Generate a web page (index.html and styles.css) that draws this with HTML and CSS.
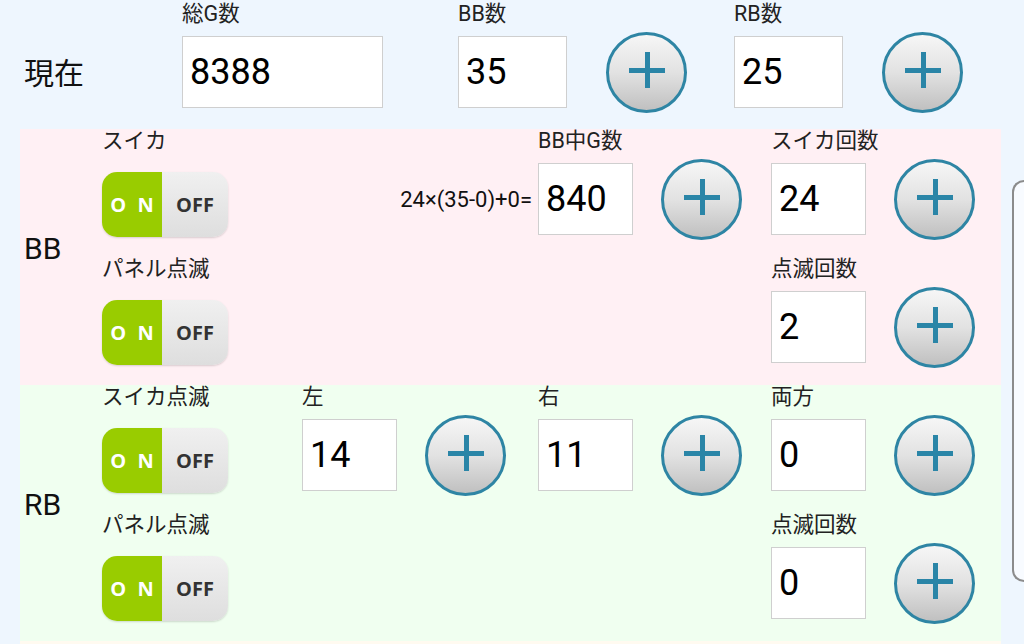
FILE: index.html
```html
<!DOCTYPE html>
<html lang="ja">
    <head>
        <meta charset="utf-8">
        <link rel="stylesheet" href="styles.css">
    </head>
    <body>
        <div class="main-wrapper">
            <div class="now-row">
                <div class="row-title">現在</div>
                <div class="field">
                    <div class="field-label">総G数</div>
                    <div class="field-body">
                        <div class="num-box wide">8388</div>
                    </div>
                </div>
                <div class="field">
                    <div class="field-label">BB数</div>
                    <div class="field-body">
                        <div class="num-box mid">35</div>
                        <a href="javascript:;" class="plus-btn"></a>
                    </div>
                </div>
                <div class="field">
                    <div class="field-label">RB数</div>
                    <div class="field-body">
                        <div class="num-box mid">25</div>
                        <a href="javascript:;" class="plus-btn"></a>
                    </div>
                </div>
            </div>

            <div class="section bb">
                <div class="section-title">BB</div>

                <div class="field">
                    <div class="field-label">スイカ</div>
                    <div class="field-body">
                        <div class="toggle"><span class="on">O N</span><span class="off">OFF</span></div>
                    </div>
                </div>
                <div class="field">
                    <div class="field-label"></div>
                    <div class="field-body formula">24×(35-0)+0=</div>
                </div>
                <div class="field">
                    <div class="field-label">BB中G数</div>
                    <div class="field-body">
                        <div class="num-box">840</div>
                        <a href="javascript:;" class="plus-btn"></a>
                    </div>
                </div>
                <div class="field">
                    <div class="field-label">スイカ回数</div>
                    <div class="field-body">
                        <div class="num-box">24</div>
                        <a href="javascript:;" class="plus-btn"></a>
                    </div>
                </div>

                <div class="field">
                    <div class="field-label">パネル点滅</div>
                    <div class="field-body">
                        <div class="toggle"><span class="on">O N</span><span class="off">OFF</span></div>
                    </div>
                </div>
                <div class="field"></div>
                <div class="field"></div>
                <div class="field">
                    <div class="field-label">点滅回数</div>
                    <div class="field-body">
                        <div class="num-box">2</div>
                        <a href="javascript:;" class="plus-btn"></a>
                    </div>
                </div>
            </div>

            <div class="section rb">
                <div class="section-title">RB</div>

                <div class="field">
                    <div class="field-label">スイカ点滅</div>
                    <div class="field-body">
                        <div class="toggle"><span class="on">O N</span><span class="off">OFF</span></div>
                    </div>
                </div>
                <div class="field">
                    <div class="field-label">左</div>
                    <div class="field-body">
                        <div class="num-box">14</div>
                        <a href="javascript:;" class="plus-btn"></a>
                    </div>
                </div>
                <div class="field">
                    <div class="field-label">右</div>
                    <div class="field-body">
                        <div class="num-box">11</div>
                        <a href="javascript:;" class="plus-btn"></a>
                    </div>
                </div>
                <div class="field">
                    <div class="field-label">両方</div>
                    <div class="field-body">
                        <div class="num-box">0</div>
                        <a href="javascript:;" class="plus-btn"></a>
                    </div>
                </div>

                <div class="field">
                    <div class="field-label">パネル点滅</div>
                    <div class="field-body">
                        <div class="toggle"><span class="on">O N</span><span class="off">OFF</span></div>
                    </div>
                </div>
                <div class="field"></div>
                <div class="field"></div>
                <div class="field">
                    <div class="field-label">点滅回数</div>
                    <div class="field-body">
                        <div class="num-box">0</div>
                        <a href="javascript:;" class="plus-btn"></a>
                    </div>
                </div>
            </div>

            <div class="section extra"></div>
        </div>

        <div class="side-panel"></div>
    </body>
</html>
```

FILE: styles.css
```css
html, body {
    margin: 0;
    height: 100%;
    overflow: hidden;
}
body {
    background: #eef6fe;
    font-family: Roboto, "Noto Sans CJK JP", sans-serif;
    color: #111;
}
.main-wrapper {
    width: 981px;
    margin-left: 20px;
}

/* top row */
.now-row {
    display: grid;
    grid-template-columns: 162px 276px 276px 267px;
    padding: 2px 0 17px;
    height: 110px;
}
.row-title,
.section-title {
    padding-left: 4px;
    font-size: 30px;
    display: flex;
    align-items: center;
}
.now-row .row-title {
    padding-top: 27px;
}

/* field cell: label + box + plus */
.field-label {
    height: 24px;
    line-height: 24px;
    font-size: 21.5px;
    color: #222;
    white-space: nowrap;
}
.field-body {
    display: flex;
    align-items: center;
    height: 80px;
    margin-top: 6px;
}
.num-box {
    box-sizing: border-box;
    width: 95px;
    height: 72px;
    line-height: 70px;
    padding-left: 7px;
    background: #fff;
    border: 1px solid #cfcfcf;
    font-size: 36px;
    color: #000;
}
.num-box.wide {
    width: 201px;
}
.num-box.mid {
    width: 109px;
}
.num-box + .plus-btn {
    margin-left: 28px;
}
.now-row .num-box + .plus-btn {
    margin-left: 39px;
}

.plus-btn {
    position: relative;
    display: block;
    box-sizing: border-box;
    width: 81px;
    height: 81px;
    border-radius: 50%;
    border: 3px solid #2e85a4;
    background: linear-gradient(#f6f6f6, #e2e2e2 50%, #c0c0c0);
}
.plus-btn::before,
.plus-btn::after {
    content: "";
    position: absolute;
    left: 50%;
    top: 50%;
    background: #2a85a7;
}
.plus-btn::before {
    width: 36px;
    height: 5px;
    margin: -4px 0 0 -18px;
}
.plus-btn::after {
    width: 5px;
    height: 36px;
    margin: -20px 0 0 -2px;
}

/* sections */
.section {
    display: grid;
    grid-template-columns: 82px 200px 236px 233px 230px;
    grid-template-rows: 128px 128px;
}
.section .section-title {
    grid-row: 1 / 3;
    padding-bottom: 18px;
}
.section.bb {
    background: #fff0f4;
}
.section.rb {
    background: #f0fff0;
}
.section.extra {
    background: #fffaf0;
    grid-template-rows: 3px;
}
.formula {
    justify-content: flex-end;
    padding-right: 6px;
    font-size: 22px;
    color: #111;
}

/* on/off switch */
.toggle {
    display: flex;
    align-self: flex-start;
    margin-top: 13px;
    width: 126px;
    height: 65px;
    border-radius: 15px;
    overflow: hidden;
    box-shadow: 0 1px 2px rgba(0, 0, 0, 0.15);
    font-family: "Open Sans", Roboto, sans-serif;
    font-weight: bold;
    font-size: 20px;
}
.toggle span {
    display: flex;
    align-items: center;
    justify-content: center;
}
.toggle .on {
    width: 60px;
    background: #99cc00;
    color: #fff;
    letter-spacing: 3px;
    padding-left: 3px;
    box-sizing: border-box;
}
.toggle .off {
    flex: 1;
    background: linear-gradient(#f0f0f0, #dedede);
    color: #333;
}

/* floating panel cut by the right edge */
.side-panel {
    position: absolute;
    left: 1012px;
    top: 180px;
    width: 10px;
    height: 398px;
    border: 2px solid #8c8c8c;
    border-right: none;
    border-radius: 22px 0 0 22px;
    background: #f8fbff;
}
```
